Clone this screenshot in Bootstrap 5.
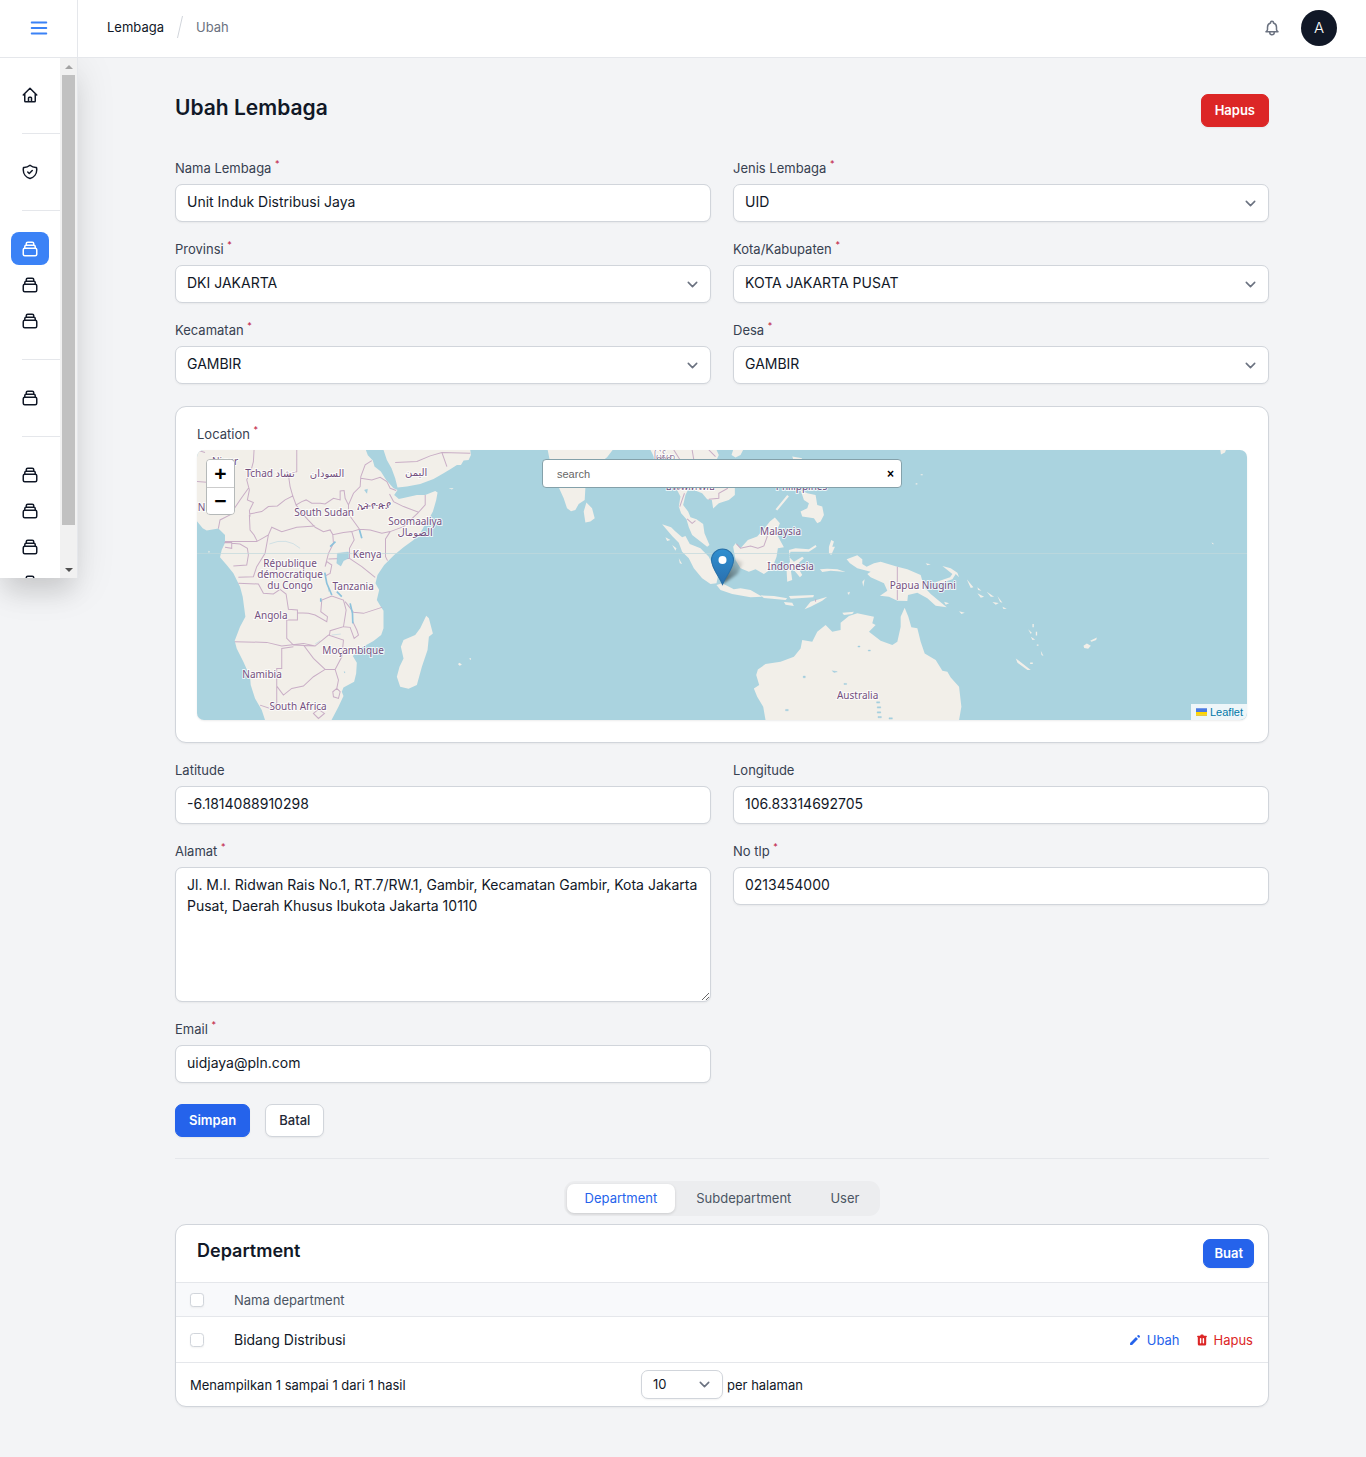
<!DOCTYPE html>
<html lang="id">
<head>
<meta charset="utf-8">
<meta name="viewport" content="width=device-width, initial-scale=1">
<title>Ubah Lembaga</title>
<link href="https://cdn.jsdelivr.net/npm/bootstrap@5.3.0/dist/css/bootstrap.min.css" rel="stylesheet">
<style>
:root{--line:#e5e7eb;--edge:#d1d5db;--ink:#111827;--blue:#2563eb;--red:#dc2626}
body{background:#f3f4f6;color:var(--ink);font-family:Inter,"Noto Sans",sans-serif;font-size:13px;line-height:20px}
a{text-decoration:none}
.ico{width:18px;height:18px;fill:none;stroke:currentColor;stroke-width:2;stroke-linecap:round;stroke-linejoin:round;flex:none;display:block}
.topbar{height:58px;border-bottom:1px solid var(--line);background:#fff}
.menu-cell{width:78px;border-right:1px solid var(--line);padding-bottom:1px}
.menu-cell .ico{width:22px;height:22px}
.menu-btn{color:#3b82f6;border:0;background:none;padding:0}
.crumbs{gap:13px;padding:0 0 3px 29px}
.crumbs a{color:var(--ink)}
.crumbs span{color:#6b7280}
.crumb-sep{width:6px;height:22px;stroke:var(--edge);stroke-width:1}
.top-tools{gap:20px;padding:0 29px 1px 0}
.bell-btn{border:0;background:none;padding:0;color:#6b7280}
.avatar{width:36px;height:36px;background:var(--ink);color:#fff;font-size:15px;font-weight:300;border:0;padding:0}
.sidebar{width:78px;height:520px;background:#fff;border-right:1px solid var(--line);box-shadow:0 20px 25px -5px rgba(0,0,0,.1),0 8px 40px rgba(0,0,0,.1);position:relative;z-index:2;clip-path:inset(0 -60px -80px 0)}
.side-nav{flex:1;padding-top:20px;overflow:hidden}
.side-nav a{display:flex;align-items:center;justify-content:center;width:38px;height:33px;margin:0 0 3px 11px;border-radius:8px;color:var(--ink)}
.side-nav a.active{background:#3b82f6;color:#fff}
.side-nav hr{margin:22px 0 21px 22px;border-color:var(--line);opacity:1}
.side-track{width:17px;background:#f1f1f1;padding:0 2px}
.side-track i{height:17px;width:100%;display:flex;align-items:center;justify-content:center}
.side-thumb{height:450px;background:#c1c1c1;width:100%}
.tri{border:4px solid transparent;border-top:0;border-bottom-color:#a3a3a3}
.tri-down{border:4px solid transparent;border-bottom:0;border-top-color:#505050}
.page-box{max-width:1152px;padding:36px 29px 50px}
.page-title{font-size:21px;line-height:28px;font-weight:600}
.btn{font-size:13px;line-height:20px;font-weight:600;border-radius:7px;padding:5px 13px 6px;box-shadow:0 1px 2px rgba(0,0,0,.06)}
.btn-primary{--bs-btn-bg:#2563eb;--bs-btn-border-color:#2563eb}
.btn-danger{--bs-btn-bg:#dc2626;--bs-btn-border-color:#dc2626}
.btn-plain{background:#fff;border:1px solid var(--edge);color:#1f2937;font-weight:500}
.btn-compact{padding:4px 10px;line-height:19px}
.edit-form{padding-top:36px}
.field-grid{--bs-gutter-x:22px;--bs-gutter-y:22px}
.field-label{display:block;line-height:11px;margin-bottom:10px;color:#374151}
.field-label sup{color:#be123c;font-size:9px;top:-6px;line-height:0}
.form-control,.form-select{font-family:inherit;font-size:14px;line-height:22px;padding:6px 11px 8px;border:1px solid var(--edge);border-radius:7px;color:var(--ink);box-shadow:0 1px 2px rgba(0,0,0,.05)}
.form-select{background-image:url("data:image/svg+xml,%3Csvg xmlns='http://www.w3.org/2000/svg' fill='none' viewBox='0 0 20 20'%3E%3Cpath stroke='%236b7280' stroke-linecap='round' stroke-linejoin='round' stroke-width='1.5' d='M6 8l4 4 4-4'/%3E%3C/svg%3E");background-size:21px;background-position:right 7px center;padding-right:36px}
textarea.form-control{height:135px;line-height:21px}
.panel{background:#fff;border:1px solid var(--edge);border-radius:11px;box-shadow:0 1px 2px rgba(0,0,0,.05)}
.map-panel{padding:22px 21px}
.map-view{height:270px;border-radius:7px;background:#aad3df;box-shadow:0 1px 2px rgba(0,0,0,.08)}
.map-view>svg{width:100%;height:100%;display:block}
.land{fill:#f2efe9;stroke:none}
.frontier{fill:none;stroke:#c9aec6;stroke-width:3}
.inland{fill:#aad3df;stroke:#8fc3dd;stroke-width:1}
.river{fill:none;stroke:#8cc2dc;stroke-width:5}
.place{font:400 10px "Noto Sans","DejaVu Sans",sans-serif;fill:#74507f;stroke:#fff;stroke-opacity:.75;stroke-width:2px;paint-order:stroke;text-anchor:middle}
.map-zoom{top:9px;left:9px;width:29px;border:1px solid #b5b9b9;border-radius:4px;overflow:hidden}
.map-zoom button{height:27px;border:0;background:#fff;color:#000;font:700 21px/26px "Liberation Sans",sans-serif;padding:0}
.map-zoom button+button{border-top:1px solid #ccc}
.map-search{top:9px;width:360px;height:29px;border:1px solid #84a1aa;border-radius:4px;background:#fff;left:0;right:0;margin:auto}
.map-search input{border:0;outline:0;background:none;flex:1;font:11px "Liberation Sans",sans-serif;padding:0 14px}
.map-search input::placeholder{color:#666;opacity:1}
.map-search button{border:0;background:none;color:#000;font:700 12px "Liberation Sans",sans-serif;padding:0 7px}
.map-credit{right:0;bottom:0;background:rgba(255,255,255,.8);padding:0 4px 0 5px;font:11px/16px "Liberation Sans",sans-serif;gap:3px;border-bottom-right-radius:7px}
.map-credit a{color:#0078a8}
.map-credit svg{width:11px;height:8px}
.form-buttons{gap:15px;margin:21px 0}
.rule{margin:0;border-color:var(--line);opacity:1}
.tab-strip{margin:22px auto 8px;padding:3px;gap:3px;background:#ecedef;border-radius:11px;width:max-content}
.tab-strip button{border:0;background:none;color:#4b5563;padding:4px 18px 5px;border-radius:7px}
.tab-strip .active{background:#fff;color:var(--blue);box-shadow:0 1px 3px rgba(0,0,0,.15)}
.panel-head{padding:14px 14px 14px 21px}
.panel-title{font-size:18px;line-height:24px;font-weight:600}
.data-grid{width:100%;border-top:1px solid var(--line);border-bottom:1px solid var(--line)}
.data-grid th{height:34px;background:#f8f9fb;font-weight:400;color:#4b5563;border-bottom:1px solid var(--line)}
.data-grid td{height:46px;font-size:14px}
.pick-col{width:57px;padding-left:14px;line-height:0}
.form-check-input{width:14px;height:14px;margin:0;border-color:var(--edge);border-radius:3px;box-shadow:0 1px 2px rgba(0,0,0,.05)}
.row-links{gap:15px;padding-right:14px;font-size:13px}
.row-links a{display:flex;align-items:center;gap:5px}
.row-links svg{width:14px;height:14px;fill:currentColor}
.link-edit{color:var(--blue)}
.link-del{color:var(--red)}
.panel-foot{padding:7px 14px}
.panel-foot .form-select{width:82px;height:29px;font-size:13px;line-height:18px;padding:4px 11px 5px}
</style>
</head>
<body>
<svg class="d-none" aria-hidden="true">
<symbol id="stack" viewBox="0 0 24 24"><path d="M19 11H5m14 0a2 2 0 012 2v6a2 2 0 01-2 2H5a2 2 0 01-2-2v-6a2 2 0 012-2m14 0V9a2 2 0 00-2-2M5 11V9a2 2 0 012-2m0 0V5a2 2 0 012-2h6a2 2 0 012 2v2M7 7h10"/></symbol>
</svg>
<header class="topbar d-flex align-items-stretch">
  <div class="menu-cell d-flex align-items-center justify-content-center"><button class="menu-btn" type="button" aria-label="Menu"><svg class="ico" viewBox="0 0 24 24"><path d="M4 6h16M4 12h16M4 18h16"/></svg></button></div>
  <nav class="crumbs d-flex align-items-center" aria-label="Breadcrumb"><a href="#">Lembaga</a><svg class="crumb-sep" viewBox="0 0 6 22"><path d="M5.500 0L.5 22"/></svg><span>Ubah</span></nav>
  <div class="top-tools ms-auto d-flex align-items-center">
    <button class="bell-btn" type="button" aria-label="Notifikasi"><svg class="ico" viewBox="0 0 24 24"><path d="M15 17h5l-1.405-1.405A2.032 2.032 0 0118 14.158V11a6.002 6.002 0 00-4-5.659V5a2 2 0 10-4 0v.341C7.670 6.165 6 8.388 6 11v3.159c0 .538-.214 1.055-.595 1.436L4 17h5m6 0v1a3 3 0 11-6 0v-1m6 0H9"/></svg></button>
    <button class="avatar rounded-circle" type="button">A</button>
  </div>
</header>
<div class="d-flex align-items-start">
  <aside class="sidebar d-flex flex-shrink-0">
    <nav class="side-nav" aria-label="Utama">
      <a href="#" aria-label="Beranda"><svg class="ico" viewBox="0 0 24 24"><path d="M3 12l2-2m0 0l7-7 7 7M5 10v10a1 1 0 001 1h3m10-11l2 2m-2-2v10a1 1 0 01-1 1h-3m-6 0a1 1 0 001-1v-4a1 1 0 011-1h2a1 1 0 011 1v4a1 1 0 001 1m-6 0h6"/></svg></a>
      <hr>
      <a href="#" aria-label="Peran"><svg class="ico" viewBox="0 0 24 24"><path d="M9 12l2 2 4-4m5.618-4.016A11.955 11.955 0 0112 2.944a11.955 11.955 0 01-8.618 3.040A12.020 12.020 0 003 9c0 5.591 3.824 10.290 9 11.622 5.176-1.332 9-6.030 9-11.622 0-1.042-.133-2.052-.382-3.016z"/></svg></a>
      <hr>
      <a href="#" class="active" aria-label="Lembaga"><svg class="ico"><use href="#stack"/></svg></a>
      <a href="#" aria-label="Department"><svg class="ico"><use href="#stack"/></svg></a>
      <a href="#" aria-label="Subdepartment"><svg class="ico"><use href="#stack"/></svg></a>
      <hr>
      <a href="#" aria-label="User"><svg class="ico"><use href="#stack"/></svg></a>
      <hr>
      <a href="#" aria-label="Provinsi"><svg class="ico"><use href="#stack"/></svg></a>
      <a href="#" aria-label="Kota"><svg class="ico"><use href="#stack"/></svg></a>
      <a href="#" aria-label="Kecamatan"><svg class="ico"><use href="#stack"/></svg></a>
      <a href="#" aria-label="Desa"><svg class="ico"><use href="#stack"/></svg></a>
    </nav>
    <div class="side-track d-flex flex-column" aria-hidden="true"><i><b class="tri"></b></i><div class="side-thumb"></div><i class="mt-auto"><b class="tri-down"></b></i></div>
  </aside>
  <main class="flex-grow-1">
    <div class="page-box mx-auto">
      <div class="d-flex align-items-start justify-content-between">
        <h1 class="page-title mb-0">Ubah Lembaga</h1>
        <button class="btn btn-danger" type="button">Hapus</button>
      </div>
      <form class="edit-form">
        <div class="row field-grid">
          <div class="col-6"><label class="field-label" for="nama">Nama Lembaga <sup>*</sup></label><input class="form-control" id="nama" value="Unit Induk Distribusi Jaya"></div>
          <div class="col-6"><label class="field-label" for="jenis">Jenis Lembaga <sup>*</sup></label><select class="form-select" id="jenis"><option>UID</option></select></div>
          <div class="col-6"><label class="field-label" for="prov">Provinsi <sup>*</sup></label><select class="form-select" id="prov"><option>DKI JAKARTA</option></select></div>
          <div class="col-6"><label class="field-label" for="kota">Kota/Kabupaten <sup>*</sup></label><select class="form-select" id="kota"><option>KOTA JAKARTA PUSAT</option></select></div>
          <div class="col-6"><label class="field-label" for="kec">Kecamatan <sup>*</sup></label><select class="form-select" id="kec"><option>GAMBIR</option></select></div>
          <div class="col-6"><label class="field-label" for="desa">Desa <sup>*</sup></label><select class="form-select" id="desa"><option>GAMBIR</option></select></div>
          <div class="col-12">
            <div class="panel map-panel">
              <label class="field-label" for="cari">Location <sup>*</sup></label>
              <div class="map-view position-relative overflow-hidden">
                <svg viewBox="0 0 1049 270" preserveAspectRatio="xMidYMid slice" role="img" aria-label="Peta">
                  <defs>
                    <linearGradient id="pin" x1="0" y1="0" x2="0" y2="1"><stop offset="0" stop-color="#2e8fd0"/><stop offset="1" stop-color="#2a6fae"/></linearGradient>
                    <linearGradient id="pinShade" x1="0" y1="1" x2="1" y2="0"><stop offset="0" stop-color="#000" stop-opacity=".6"/><stop offset="1" stop-color="#000" stop-opacity="0"/></linearGradient>
                    <filter id="soft" x="-30%" y="-30%" width="160%" height="160%"><feGaussianBlur stdDeviation="1.500"/></filter>
                  </defs>
                  <!-- Africa and Arabia -->
                  <g transform="translate(-7 -10) scale(.33333)">
                    <path class="land" d="M20 30H527L533 46 548 62 553 80 572 95 588 120 610 145 622 150 612 165 626 177 650 172 680 165 705 165 735 153 742 158 738 180 728 215 712 245 700 262 690 280 670 300 640 322 612 345 582 375 562 405 556 430 567 450 560 480 572 500 580 512 580 565 573 585 550 603 515 622 488 648 500 668 498 700 492 725 460 742 455 755 460 768 445 800 424 840H225L215 810 195 775 182 735 180 710 160 665 140 625 134 602 150 560 166 530 162 500 158 470 150 440 130 400 110 375 90 352 95 330 105 308 105 285 85 266 50 272 38 265 20 243Z"/>
                    <path class="land" d="M580 30L590 60 604 85 615 115 622 143 650 140 690 132 730 117 760 100 780 88 800 75 812 75 820 62 835 60 842 45 840 30ZM708 527L716 535 728 580 716 590 712 630 695 680 680 735 655 746 630 740 620 710 628 680 640 655 632 620 640 600 675 585 690 565ZM775 145L790 145 785 149ZM803 672L808 668 815 674 808 677ZM836 656L842 654 842 660ZM55 332L60 335 56 339Z"/>
                    <path class="frontier" d="M20 125L50 127M192 30L190 65 182 95 170 120 178 150 172 180 190 188 178 212 180 230M178 225L180 270 192 285 202 305M178 222L215 215 235 200 262 198 285 180 308 168 300 140 295 105 320 95V30M308 168L318 195 335 185 348 180 365 190 390 190 405 192 430 175 450 180 450 153 462 152 465 175 475 195 490 160 510 140 512 110 525 75 545 62M318 195L340 225 375 262 400 275 420 270 428 284 460 278 485 275 508 268 475 222 475 195M512 115L545 120 570 112 590 125 600 145 618 152M598 162L610 185 640 200 685 217 705 195V165M508 268L540 270 575 280 600 275 640 260 685 217M600 275L586 297V350L592 362M485 275L492 300 478 325V355L415 357M478 355L515 380 555 412M428 284L430 310 415 340 405 380 410 365 425 375 420 400 405 408M20 30L45 38M85 266L90 240 120 225 150 180 175 145M105 305H200L235 285 245 262 275 275 320 262 375 258M103 308L125 308V325L105 322M125 310L150 312 172 325 175 345 170 375 130 378M235 285L225 340 200 380 190 410 145 412M145 430L205 432 220 460 250 462 270 448 288 462 295 508 322 510V540H290V595L310 615 375 618 415 585 460 600 455 650 435 688M322 518L355 520 375 525 410 545 412 530 392 515 395 480 425 468 460 480 468 510 460 560 420 572 418 585M465 485L490 517 520 520 575 502M460 560L480 562 492 595 505 585 500 570 488 545M134 605L230 607 275 618 340 610 375 618M310 620L275 625V685H260V790L240 805 210 795M260 738L280 765 305 745 340 738 370 710 405 688 435 688 445 720 440 745 428 755 430 770 445 775 450 755 440 745M340 615L370 655 405 688M370 820L385 808 403 820 385 835ZM615 68L680 65 720 48 755 38 840 40M755 38L770 80"/>
                    <path class="inland" d="M442 340L475 336 475 355 460 362 452 378 440 370ZM523 150L532 148 530 160ZM388 805L392 802 392 808ZM462 695L464 695 464 699Z"/>
                    <path class="river" d="M404 398L410 430 425 465M480 490L487 520 488 550M508 270L515 295M436 305L420 320M392 475V485M440 455L455 470"/>
                    <path class="river" style="stroke-width:2" d="M375 612L390 602M425 585L452 582M415 440V455M238 312Q290 290 330 325" opacity=".5"/>
                  </g>
                  <!-- India and Sri Lanka -->
                  <g transform="translate(253 -10) scale(.33333)"><path class="land" d="M292 30H487L470 52 440 75 405 145 403 180 385 192 375 210 362 214 350 205 340 175 325 142 305 95ZM408 188L425 205 433 235 420 245 405 248 400 215Z"/></g>
                  <!-- Indochina, Indonesia, Papua and Australia -->
                  <g transform="translate(443 -10) scale(.33333)">
                    <path class="land" d="M30 30H228L235 45 228 60 262 100 283 141 283 165 265 180 235 190 218 206 214 180 200 178 185 160 160 150 145 145 135 165 128 195 143 215 150 232 168 238 188 252 192 280 207 315 200 320 180 305 155 285 145 262 138 238 122 220 115 200 120 170 105 141 60 90ZM278 30H308L300 45 285 53 273 45Z"/>
                    <path class="land" d="M65 253L92 262 105 275 125 292 135 288 148 312 180 325 205 350 212 365 228 385 232 410 228 430 210 432 185 415 160 385 145 355 125 335 115 308 95 288ZM278 320L285 310 300 325 322 300 350 290 372 265 388 245 403 233 418 250 412 265 410 285 430 322 412 325 408 350 395 385 370 402 345 388 325 395 300 385 285 360ZM228 435L245 430 280 448 300 445 330 450 365 470 330 472 275 462 240 450ZM360 466L400 468 440 475 435 480 370 474ZM445 468L520 465 518 472 450 476ZM430 486L455 488 460 498 435 494ZM492 508L510 485 560 470 545 482 510 500ZM445 330L465 325 505 328 525 315 528 320 505 335 450 335 445 350 460 365 485 350 490 355 468 375 485 405 478 412 460 390 450 385 455 420 440 425 438 390 448 365ZM565 320L572 300 580 305 575 320 583 320 572 345 565 340ZM538 388L560 386 590 388 615 396 590 394 570 392 545 396ZM480 150L500 160 525 165 530 195 545 200 550 225 540 245 530 250 520 235 485 230 480 215 500 205 505 190 490 180ZM405 208L440 165 445 170 410 212ZM455 50L485 55 480 60 458 58ZM75 292L90 300 80 303ZM95 315L108 325 105 332ZM115 355L125 372 118 370ZM620 458L628 455 625 465ZM665 425L672 418 668 440ZM225 365L240 378 232 375Z"/>
                    <path class="land" d="M618 358L650 346 665 358 665 372 678 380 700 370 720 365 770 380 800 388 840 405 850 440 870 462 918 502 885 497 860 475 830 458 802 465 800 483 770 482 745 470 718 467 740 452 730 430 690 412 680 402 690 395 650 385 628 370ZM792 503L803 530 812 562 830 565 840 605 852 640 885 660 905 692 920 695 930 712 955 740 962 800 955 840H375L368 800 350 770 340 745 356 735 347 705 352 688 375 672 420 665 460 650 480 625 485 600 515 605 530 575 555 555 575 575 600 570 600 548 625 528 650 520 700 530 695 550 705 555 685 575 720 602 755 615 770 605 780 560 780 530ZM605 518L640 515 635 522 610 525Z"/>
                    <path class="frontier" d="M100 30L120 62M155 30L160 60M205 30L225 50M118 200L132 160M140 237L155 250 165 242M288 312L300 325 330 318 352 325 370 318 380 290 375 265M770 380V480M205 178L235 175 235 160 262 145M525 478V485"/>
                    <path class="inland" d="M652 618H658V621H652ZM683 630H689V633H683ZM575 692L590 695 580 697ZM488 708H494V713H488ZM708 785H717V789H708ZM710 800H720V804H710ZM710 815H720V819H710ZM712 829H722V833H712ZM745 833H755V837H745ZM435 808H443V812H435ZM610 730H618V733H610Z"/>
                  </g>
                  <!-- Pacific islands -->
                  <g transform="translate(703 -10) scale(.33333)"><path class="land" d="M125 378L150 385 170 398 175 412 165 402 155 418 120 430 100 428 148 412 155 402ZM75 370L90 373 80 376ZM198 418L218 442 210 444ZM230 442L242 452 232 450ZM258 455L280 470 270 470ZM230 460L250 470 240 473ZM290 468L305 488 298 486ZM275 486L294 489 285 494ZM305 500L318 506 308 507ZM175 514L192 518 182 522ZM130 485L145 490 135 494ZM382 568L393 578 390 582ZM390 590L403 598 395 600ZM345 655L390 690 380 690 350 668ZM548 617L558 610 570 617 562 626 550 624ZM568 602L588 592 586 600 572 605ZM958 30H975L972 38 960 44ZM420 632L428 648 422 645ZM60 103H66V106H60ZM45 130H50V134H45ZM405 575H409V586H405ZM395 552H399V562H395ZM408 613H413V617H408ZM388 667H396V672H388ZM932 307L940 313 934 312Z"/></g>
                  <path d="M0 103.500H1049" stroke="#c1d9dc" stroke-opacity=".7"/>
                  <g class="place">
                    <text x="28" y="15">Niger</text><text x="73" y="27">Tchad تشاد</text><text x="130" y="27">السودان</text><text x="219" y="26">اليمن</text>
                    <text x="18" y="61">Nigeria</text><text x="127" y="66">South Sudan</text><text x="177" y="59">ኢትዮጵያ</text>
                    <text x="218" y="75">Soomaaliya</text><text x="218" y="86">الصومال</text><text x="170" y="108">Kenya</text>
                    <text x="93" y="117">République</text><text x="93" y="128">démocratique</text><text x="93" y="139">du Congo</text>
                    <text x="156" y="140">Tanzania</text><text x="74" y="169">Angola</text><text x="156" y="204">Moçambique</text>
                    <text x="65" y="228">Namibia</text><text x="101" y="260">South Africa</text>
                    <text x="467" y="10">မြန်မာ</text><text x="493" y="40">ประเทศไทย</text><text x="604" y="40">Philippines</text>
                    <text x="583" y="85">Malaysia</text><text x="593" y="120">Indonesia</text><text x="725" y="139">Papua Niugini</text><text x="660" y="249">Australia</text>
                  </g>
                  <path d="M525 134L528 118 536 108 546 112 540 124Z" fill="url(#pinShade)" filter="url(#soft)"/>
                  <path d="M525 134.500C522 127 514 118 514 110A11 11 0 01536 110C536 118 528 127 525 134.500Z" fill="url(#pin)" stroke="#2870a8" stroke-width="1"/>
                  <circle cx="525" cy="110" r="4" fill="#fff"/>
                </svg>
                <div class="map-zoom position-absolute d-flex flex-column"><button type="button" aria-label="Perbesar">+</button><button type="button" aria-label="Perkecil">−</button></div>
                <div class="map-search position-absolute d-flex"><input id="cari" type="text" placeholder="search"><button type="button" aria-label="Bersihkan">×</button></div>
                <div class="map-credit position-absolute d-flex align-items-center"><svg viewBox="0 0 12 8"><path fill="#4c7be1" d="M0 0h12v4H0z"/><path fill="#ffd500" d="M0 4h12v3H0z"/><path fill="#e0bc00" d="M0 7h12v1H0z"/></svg><a href="#">Leaflet</a></div>
              </div>
            </div>
          </div>
          <div class="col-6"><label class="field-label" for="lat">Latitude</label><input class="form-control" id="lat" value="-6.1814088910298"></div>
          <div class="col-6"><label class="field-label" for="lng">Longitude</label><input class="form-control" id="lng" value="106.83314692705"></div>
          <div class="col-6"><label class="field-label" for="alamat">Alamat <sup>*</sup></label><textarea class="form-control" id="alamat">Jl. M.I. Ridwan Rais No.1, RT.7/RW.1, Gambir, Kecamatan Gambir, Kota Jakarta Pusat, Daerah Khusus Ibukota Jakarta 10110</textarea></div>
          <div class="col-6"><label class="field-label" for="tlp">No tlp <sup>*</sup></label><input class="form-control" id="tlp" value="0213454000"></div>
          <div class="col-6"><label class="field-label" for="email">Email <sup>*</sup></label><input class="form-control" type="email" id="email" value="uidjaya@pln.com"></div>
        </div>
        <div class="form-buttons d-flex"><button class="btn btn-primary" type="submit">Simpan</button><button class="btn btn-plain" type="button">Batal</button></div>
      </form>
      <hr class="rule">
      <div class="tab-strip d-flex" role="tablist"><button class="active" type="button" role="tab" aria-selected="true">Department</button><button type="button" role="tab">Subdepartment</button><button type="button" role="tab">User</button></div>
      <section class="panel">
        <div class="panel-head d-flex align-items-start justify-content-between"><h2 class="panel-title mb-0">Department</h2><button class="btn btn-primary btn-compact" type="button">Buat</button></div>
        <table class="data-grid">
          <thead><tr><th class="pick-col"><input class="form-check-input" type="checkbox" aria-label="Pilih semua"></th><th>Nama department</th><th></th></tr></thead>
          <tbody><tr><td class="pick-col"><input class="form-check-input" type="checkbox" aria-label="Pilih baris"></td><td>Bidang Distribusi</td><td><div class="row-links d-flex justify-content-end">
            <a class="link-edit" href="#"><svg viewBox="0 0 20 20"><path d="M13.586 3.586a2 2 0 112.828 2.828l-.793.793-2.828-2.828.793-.793zM11.379 5.793L3 14.172V17h2.828l8.380-8.379-2.830-2.828z"/></svg>Ubah</a>
            <a class="link-del" href="#"><svg viewBox="0 0 20 20"><path fill-rule="evenodd" d="M9 2a1 1 0 00-.894.553L7.382 4H4a1 1 0 000 2v10a2 2 0 002 2h8a2 2 0 002-2V6a1 1 0 100-2h-3.382l-.724-1.447A1 1 0 0011 2H9zM7 8a1 1 0 012 0v6a1 1 0 11-2 0V8zm5-1a1 1 0 00-1 1v6a1 1 0 102 0V8a1 1 0 00-1-1z"/></svg>Hapus</a></div></td></tr></tbody>
        </table>
        <div class="panel-foot row g-0 align-items-center"><div class="col">Menampilkan 1 sampai 1 dari 1 hasil</div><div class="col-auto d-flex align-items-center gap-1"><select class="form-select" id="per"><option>10</option></select><label for="per">per halaman</label></div><div class="col"></div></div>
      </section>
    </div>
  </main>
</div>
<script src="https://cdn.jsdelivr.net/npm/bootstrap@5.3.0/dist/js/bootstrap.bundle.min.js"></script>
</body>
</html>
